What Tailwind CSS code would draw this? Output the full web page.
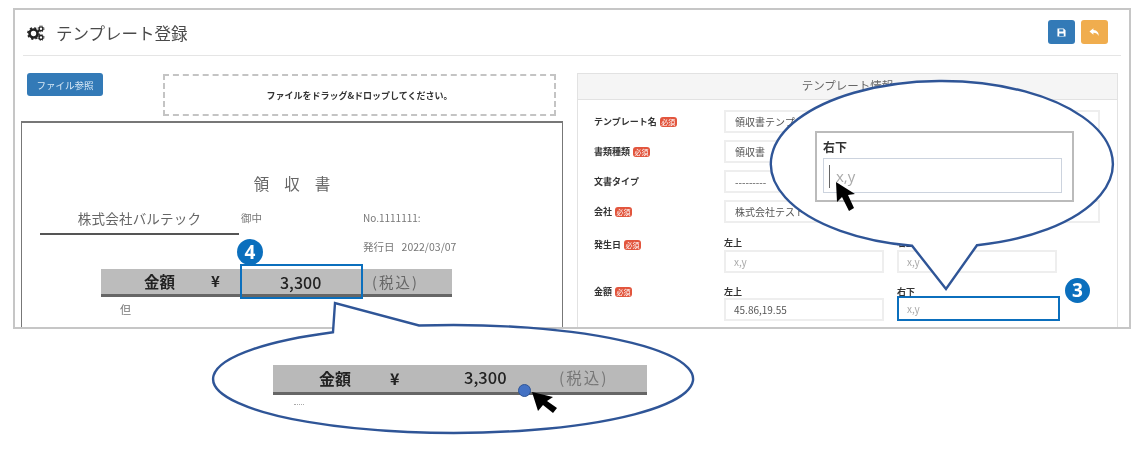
<!DOCTYPE html>
<html lang="ja">
<head>
  <meta charset="UTF-8" />
  <title>テンプレート登録</title>
  <script src="https://cdn.jsdelivr.net/npm/@tailwindcss/browser@4"></script>
</head>
<body class="bg-white">
<div class="relative w-[1144px] h-[452px] overflow-hidden blur-[0.4px] font-['Noto_Sans_CJK_JP','Noto_Sans',sans-serif] text-[#444]">

  <!-- main window -->
  <div class="ml-[13px] mt-[8px] w-[1118px] h-[321px] border-2 border-[#c6c6c6] overflow-hidden bg-white">
    <div class="mx-[8px] h-[46px] border-b border-[#e5e5e5] flex items-center justify-between">
      <div class="flex items-center pl-[4px] pt-[1px]">
        <svg class="w-[18px] h-[16px]" viewBox="0 0 18 16">
          <circle cx="6.5" cy="8.5" r="4" fill="none" stroke="#222" stroke-width="2.6"/>
          <circle cx="6.5" cy="8.5" r="5.6" fill="none" stroke="#222" stroke-width="1.6" stroke-dasharray="2.2 2.2"/>
          <circle cx="14" cy="3.8" r="1.9" fill="none" stroke="#222" stroke-width="1.4"/>
          <circle cx="14" cy="3.8" r="3" fill="none" stroke="#222" stroke-width="0.9" stroke-dasharray="1.2 1.2"/>
          <circle cx="14" cy="12.4" r="1.9" fill="none" stroke="#222" stroke-width="1.4"/>
          <circle cx="14" cy="12.4" r="3" fill="none" stroke="#222" stroke-width="0.9" stroke-dasharray="1.2 1.2"/>
        </svg>
        <h1 class="ml-[11px] text-[16.5px] leading-[22px] text-[#4a4a4a] font-normal">テンプレート登録</h1>
      </div>
      <div class="flex gap-[6px] pr-[13px] mt-[-1px]">
        <button class="w-[27px] h-[24px] rounded-[3px] bg-[#337ab7] flex items-center justify-center">
          <svg class="w-[9px] h-[9px]" viewBox="0 0 10 10"><path fill="#fff" fill-rule="evenodd" d="M0.5 0.5h7l2 2v7h-9zM2.5 1.5v2.5h4.5v-2.5zM2.5 6v2.8h5v-2.8z"/></svg>
        </button>
        <button class="w-[27px] h-[24px] rounded-[3px] bg-[#f0ad4e] flex items-center justify-center">
          <svg class="w-[11px] h-[9px]" viewBox="0 0 12 10"><path fill="#fff" d="M4.8 0.2L0.4 3.8l4.4 3.6V5.2c2.8 0 4.6 0.8 5.8 3.8 0.4-3.6-1.6-6.6-5.8-6.8z"/></svg>
        </button>
      </div>
    </div>

    <div class="flex pl-[6px] pt-[17px]">
      <!-- left: receipt preview -->
      <div class="w-[542px] shrink-0">
        <div class="flex items-start">
          <button class="ml-[6px] w-[76px] h-[23px] rounded-[3px] bg-[#337ab7] text-[#dcebf7] text-[9.5px] leading-[22px]">ファイル参照</button>
          <div class="ml-[60px] mt-[1px] w-[393px] h-[42px] border-2 border-dashed border-[#c4c4c4] flex items-center justify-center pt-[1px] text-[9px] font-bold text-[#333]">ファイルをドラッグ&amp;ドロップしてください。</div>
        </div>
        <div class="mt-[5px] h-[260px] border border-t-2 border-[#777] text-[#777]">
          <div class="mt-[50px] h-[22px] flex justify-center items-center pl-[15px] text-[15.5px] tracking-[15px] text-[#666]">領収書</div>
          <div class="mt-[11px] flex items-start">
            <div class="ml-[18px] w-[199px] h-[29px] border-b-2 border-[#555] text-center text-[13.5px] leading-[24px] tracking-[0.2px] text-[#666]">株式会社バルテック</div>
            <div class="ml-[2px] w-[122px] text-[10.5px] leading-[24px]">御中</div>
            <div class="text-[10px] leading-[24px] w-[60px] overflow-hidden whitespace-nowrap">No.1111111:</div>
          </div>
          <div class="ml-[341px] mt-[2px] h-[22px] text-[10.5px] leading-[20px] whitespace-pre">発行日   2022/03/07</div>
          <div class="ml-[79px] mt-[10px] w-[351px] h-[28px] bg-[#bcbcbc] border-b-[3px] border-[#666] flex items-center pl-[43px]">
            <span class="w-[31px] text-[15.5px] font-bold text-[#222] whitespace-nowrap">金額</span>
            <span class="ml-[36px] w-[10px] text-[15px] font-bold text-[#222]">¥</span>
            <span class="ml-[59px] w-[41px] text-[16px] font-medium text-[#222]">3,300</span>
            <span class="ml-[51px] text-[14.5px] tracking-[2px] text-[#666] whitespace-nowrap">(税込)</span>
          </div>
          <div class="ml-[98px] mt-[5px] text-[11px] leading-[14px]">但</div>
        </div>
      </div>

      <!-- right: template info -->
      <div class="ml-[14px] w-[541px] h-[270px] shrink-0 border border-[#e2e2e2]">
        <div class="h-[26px] bg-[#f5f5f5] border-b border-[#e2e2e2] text-center text-[11.5px] leading-[23px] text-[#666]">テンプレート情報</div>
        <div class="pl-[16px] pt-[10px] text-[#333]">
          <div class="flex items-center h-[23px]">
            <div class="w-[130px] flex items-center text-[9px] font-bold">テンプレート名<span class="ml-[3px] w-[17px] h-[10px] rounded-[3px] bg-[#e2553d] text-white text-[7px] leading-[10px] text-center font-normal">必須</span></div>
            <input readonly value="領収書テンプレート" class="w-[376px] h-[23px] px-[9px] border-2 border-[#eee] text-[10px] text-[#555]" />
          </div>
          <div class="flex items-center h-[23px] mt-[7px]">
            <div class="w-[130px] flex items-center text-[9px] font-bold">書類種類<span class="ml-[3px] w-[17px] h-[10px] rounded-[3px] bg-[#e2553d] text-white text-[7px] leading-[10px] text-center font-normal">必須</span></div>
            <input readonly value="領収書" class="w-[376px] h-[23px] px-[9px] border-2 border-[#eee] text-[10px] text-[#555]" />
          </div>
          <div class="flex items-center h-[23px] mt-[7px]">
            <div class="w-[130px] text-[9px] font-bold">文書タイプ</div>
            <input readonly value="---------" class="w-[376px] h-[23px] px-[9px] border-2 border-[#eee] text-[10px] text-[#555]" />
          </div>
          <div class="flex items-center h-[23px] mt-[7px]">
            <div class="w-[130px] flex items-center text-[9px] font-bold">会社<span class="ml-[3px] w-[17px] h-[10px] rounded-[3px] bg-[#e2553d] text-white text-[7px] leading-[10px] text-center font-normal">必須</span></div>
            <input readonly value="株式会社テスト" class="w-[376px] h-[23px] px-[9px] border-2 border-[#eee] text-[10px] text-[#555]" />
          </div>
          <div class="flex mt-[14px]">
            <div class="w-[130px] flex items-center h-[16px] text-[9px] font-bold">発生日<span class="ml-[3px] w-[17px] h-[10px] rounded-[3px] bg-[#e2553d] text-white text-[7px] leading-[10px] text-center font-normal">必須</span></div>
            <div class="w-[160px]">
              <div class="h-[13px] text-[9px] leading-[12px] font-bold">左上</div>
              <input readonly placeholder="x,y" class="block w-[160px] h-[23px] px-[8px] border-2 border-[#eee] text-[10px] placeholder:text-[#aaa]" />
            </div>
            <div class="ml-[13px] w-[160px]">
              <div class="h-[13px] text-[9px] leading-[12px] font-bold">右上</div>
              <input readonly placeholder="x,y" class="block w-[160px] h-[23px] px-[8px] border-2 border-[#eee] text-[10px] placeholder:text-[#aaa]" />
            </div>
          </div>
          <div class="flex mt-[12px]">
            <div class="w-[130px] flex items-center h-[13px] text-[9px] font-bold">金額<span class="ml-[3px] w-[17px] h-[10px] rounded-[3px] bg-[#e2553d] text-white text-[7px] leading-[10px] text-center font-normal">必須</span></div>
            <div class="w-[160px]">
              <div class="h-[13px] text-[9px] leading-[13px] font-bold">左上</div>
              <input readonly value="45.86,19.55" class="block w-[160px] h-[23px] px-[8px] border-2 border-[#eee] text-[10px] text-[#555]" />
            </div>
            <div class="ml-[13px] w-[163px]">
              <div class="h-[11px] text-[9px] leading-[13px] font-bold">右下</div>
              <input readonly placeholder="x,y" class="block w-[163px] h-[25px] px-[8px] border-2 border-[#0b6fbd] text-[10px] placeholder:text-[#aaa]" />
            </div>
          </div>
        </div>
      </div>
    </div>
  </div>

  <!-- callout balloons -->
  <svg class="absolute left-0 top-0 w-[1144px] h-[452px]" viewBox="0 0 1144 452">
    <path d="M912 245.7A171 83 0 1 1 977 245.2L946 289Z" fill="#fff" stroke="#2f5597" stroke-width="2.4" stroke-linejoin="miter"/>
    <path d="M419 325.5A240 54 0 1 1 333 332.2L335 303Z" fill="#fff" stroke="#2f5597" stroke-width="2.4" stroke-linejoin="miter"/>
  </svg>

  <!-- zoomed input in upper balloon -->
  <div class="absolute left-[815px] top-[131px] w-[259px] h-[71px] border-2 border-[#bbb] bg-white px-[6px]">
    <div class="h-[25px] text-[12px] leading-[27px] font-bold text-[#333]">右下</div>
    <div class="relative w-[239px] h-[35px] border border-[#ccd3de] pl-[12px] text-[15px] leading-[34px] text-[#aaa] font-['Open_Sans',sans-serif]">x,y<span class="absolute left-[5px] top-[6px] w-px h-[23px] bg-[#666]"></span></div>
  </div>

  <!-- zoomed bar in lower balloon -->
  <div class="absolute left-[273px] top-[365px] w-[374px] h-[30px] bg-[#b9b9b9] border-b-[3px] border-b-[#666] flex items-center pl-[46px] pb-[2px]">
    <span class="w-[33px] text-[16px] font-bold text-[#222] whitespace-nowrap">金額</span>
    <span class="ml-[38px] w-[10px] text-[16px] font-bold text-[#222]">¥</span>
    <span class="ml-[64px] w-[42px] text-[16.5px] font-medium text-[#222]">3,300</span>
    <span class="ml-[53px] text-[15.5px] tracking-[2px] text-[#777] whitespace-nowrap">(税込)</span>
  </div>
  <div class="absolute left-[294px] top-[404px] w-[10px] h-[2px] border-t border-dotted border-[#aaa]"></div>

  <!-- highlight on the amount -->
  <div class="absolute left-[240px] top-[264px] w-[123px] h-[35px] border-2 border-[#0b6fbd]"></div>
  <div class="absolute left-[237px] top-[239px] w-[26px] h-[26px] rounded-full bg-[#0b6fbd] text-white text-[19px] font-bold leading-[26px] text-center font-['Open_Sans',sans-serif]">4</div>
  <div class="absolute left-[1065px] top-[278px] w-[25px] h-[25px] rounded-full bg-[#0b6fbd] text-white text-[19px] font-bold leading-[25px] text-center font-['Open_Sans',sans-serif]">3</div>

  <!-- dot and cursors -->
  <div class="absolute left-[518px] top-[384px] w-[13px] h-[13px] rounded-full bg-[#4472c4] border border-[#2f5597]"></div>
  <svg class="absolute left-0 top-0 w-[1144px] h-[452px]" viewBox="0 0 1144 452">
    <path d="M836 182L837 202L842 197L849 211L854 208L848 195L855 194Z" fill="#000"/>
    <path d="M532 392L538 411L543 405L553 413L557 408L547 401L553 397Z" fill="#000"/>
  </svg>
</div>
</body>
</html>
